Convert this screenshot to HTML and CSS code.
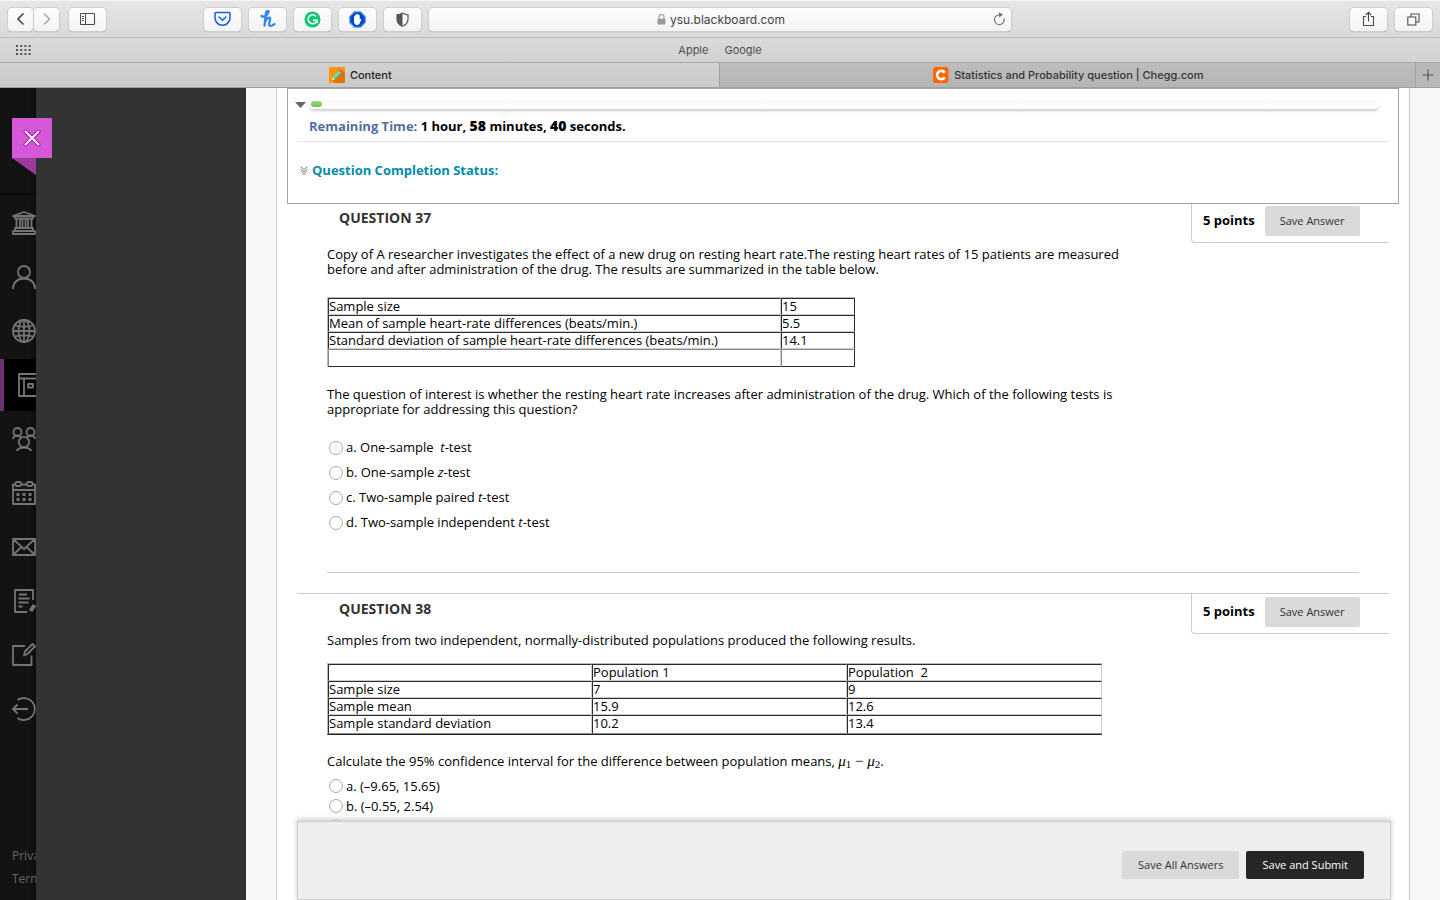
FILE: index.html
```html
<!DOCTYPE html>
<html lang="en">
<head>
<meta charset="utf-8">
<title>Content</title>
<link rel="stylesheet" href="styles.css">
</head>
<body>
<header class="browser">
  <div class="toolbar">
    <div class="tool-side">
      <div class="tool-group wide">
        <div class="history">
          <button class="tool narrow" aria-label="Back"><svg width="26" height="22" viewBox="0 0 26 22"><path d="M15.500 5.500L10 11l5.500 5.500" fill="none" stroke="#444" stroke-width="1.600"/></svg></button>
          <button class="tool narrow" aria-label="Forward"><svg width="26" height="22" viewBox="0 0 26 22"><path d="M10 5.500l5.500 5.500-5.500 5.500" fill="none" stroke="#aaa" stroke-width="1.600"/></svg></button>
        </div>
        <button class="tool" aria-label="Sidebar"><svg width="16" height="14" viewBox="0 0 16 14" fill="none" stroke="#4d4d4d"><rect x=".5" y="1.500" width="14" height="11" rx=".8" stroke-width="1.100"/><path d="M5.500 1.500v11M2 4.500h2M2 6.500h2M2 8.500h2"/></svg></button>
      </div>
      <div class="tool-group">
        <button class="tool" aria-label="Pocket"><svg width="17" height="16" viewBox="0 0 17 16" fill="none" stroke="#1a56f0" stroke-width="1.500" stroke-linecap="round" stroke-linejoin="round"><path d="M1.800 1.500h13.400q.8 0 .8.800v4.500a7.500 7.500 0 0 1-15 0V2.300q0-.8.800-.8z"/><path d="M5 6l3.500 3.200L12 6"/></svg></button>
        <button class="tool" aria-label="Honey"><svg width="16" height="18" viewBox="0 0 16 18" fill="none" stroke="#2f83f5" stroke-width="2.300" stroke-linecap="round" stroke-linejoin="round"><path d="M1.500 6c2 1.500 6 0 7-4 .3-1.500-2-1.500-2.500.8L4.500 15.500M5 12c1-3 4-5.500 5-4 1 1.600-2 6-.5 7.500 1.300 1 4-.5 5-1.500"/></svg></button>
        <button class="tool" aria-label="Grammarly"><svg width="17" height="17" viewBox="0 0 17 17"><circle cx="8.500" cy="8.500" r="8" fill="#12c573"/><path d="M12 5.500A4.400 4.400 0 1 0 12.600 10M9 9.300h4v3" fill="none" stroke="#fff" stroke-width="1.500"/></svg></button>
        <button class="tool" aria-label="Ad blocker"><svg width="17" height="17" viewBox="0 0 17 17"><path d="M5.500.8h6l4.700 4.700v6l-4.700 4.700h-6L.8 11.500v-6z" fill="#0546c5" stroke="#4a98ff" stroke-width="1.200"/><path d="M5 6q0-1 1-1V4q.8-1 1.500 0V3.300q.9-1 1.700 0V4q1-.8 1.500.3v4.500l.8-1q1 0 .8 1l-1.800 4q-1 1.200-2.500 1.200-2.500 0-3-3z" fill="#fff"/></svg></button>
        <button class="tool" aria-label="Privacy report"><svg width="13" height="15" viewBox="0 0 13 15"><path d="M6.500 1Q4 2.700 1 2.800V7q0 5 5.500 7.300Q12 12 12 7V2.800Q9 2.700 6.500 1z" fill="#fafafa" stroke="#555" stroke-width="1.200"/><path d="M6.500 1Q4 2.700 1 2.800V7q0 5 5.500 7.300z" fill="#555"/></svg></button>
      </div>
    </div>
    <div class="address">
      <span class="url"><svg width="9" height="11" viewBox="0 0 9 11"><rect x=".5" y="4.800" width="8" height="5.700" rx=".7" fill="#999"/><path d="M2 5V3a2.500 2.500 0 0 1 5 0v2" fill="none" stroke="#999" stroke-width="1.200"/></svg>ysu.blackboard.com</span>
      <button class="reload" aria-label="Reload"><svg width="13" height="14" viewBox="0 0 13 14"><path d="M11 6.200a4.900 4.900 0 1 1-4.500-3.400" fill="none" stroke="#777" stroke-width="1.200"/><path d="M6 0l4 2.800L6 5.500z" fill="#777"/></svg></button>
    </div>
    <div class="tool-side end">
      <button class="tool" aria-label="Share"><svg width="13" height="16" viewBox="0 0 13 16" fill="none" stroke="#4d4d4d" stroke-width="1.100"><path d="M4 5.500H1.500v9h10v-9H9M6.500 10.500V1.500M3.800 4l2.700-2.700L9.200 4"/></svg></button>
      <button class="tool" aria-label="Show all tabs"><svg width="13" height="13" viewBox="0 0 13 13" fill="none" stroke="#4d4d4d" stroke-width="1.100"><path d="M.8 4h8v8h-8zM4 4V1h8v8H9"/></svg></button>
    </div>
  </div>
  <nav class="favorites">
    <svg class="grid-icon" width="15" height="11" viewBox="0 0 15 11"><path d="M0 1h15M0 5h15M0 9h15" stroke="#555" stroke-width="2" stroke-dasharray="2 2.200"/></svg>
    <a href="#">Apple</a><a href="#">Google</a>
  </nav>
  <div class="tabs">
    <button class="tab active"><svg width="16" height="16" viewBox="0 0 16 16"><path d="M0 0h16v16H0z" fill="#ff9500"/><path d="M3 13L13 3l3 3v10H6z" fill="#e57200"/><path d="M5 11L11 5" stroke="#2fd9bd" stroke-width="3.200"/><path d="M5.300 10L10.500 4.800" stroke="#9cf5dd"/><path d="M11 5l1.500-1.500" stroke="#d9589b" stroke-width="3.200"/><path d="M2.800 13.200l1-3.300 2.300 2.300z" fill="#ffe9c0"/></svg>Content</button>
    <button class="tab"><svg width="16" height="16" viewBox="0 0 16 16"><rect width="15.500" height="16" rx="2.500" fill="#f60"/><path d="M11.800 5.700A4.200 4.200 0 1 0 11.800 10.300" fill="none" stroke="#fff" stroke-width="2.700"/></svg>Statistics and Probability question | Chegg.com</button>
    <button class="new-tab" aria-label="New tab"><svg width="12" height="12" viewBox="0 0 12 12"><path d="M6 .5v11M.5 6h11" stroke="#555" stroke-width="1.200"/></svg></button>
  </div>
</header>

<div class="viewport">
  <nav class="rail">
    <button class="close" aria-label="Close"><svg width="18" height="18" viewBox="0 0 18 18" stroke-linecap="round"><path d="M2.500 2.500l13 13M15.500 2.500l-13 13" stroke="#a616b0" stroke-width="4"/><path d="M2.500 2.500l13 13M15.500 2.500l-13 13" stroke="#fff" stroke-width="2"/></svg></button>
    <svg class="ribbon" width="24" height="17" viewBox="0 0 24 17"><path d="M0 0h24v17z" fill="#9c3b9d"/></svg>
    <ul class="rail-list">
      <li><a href="#" aria-label="Institution"><svg viewBox="0 0 24 24"><path d="M1 5L12 1l11 4zM3 5v2.500h18V5M4.500 8v8.500M8 8v8.500M10.500 8v8.500M13.500 8v8.500M16 8v8.500M19.500 8v8.500M3 19.500V17h18v2.500M1 20h22v3H1z"/></svg></a></li>
      <li><a href="#" aria-label="Profile"><svg viewBox="0 0 24 24"><circle cx="12" cy="7" r="6"/><path d="M1 24c0-6 4-10.500 11-10.500S23 18 23 24"/></svg></a></li>
      <li><a href="#" aria-label="Activity"><svg viewBox="0 0 24 24"><circle cx="12" cy="12" r="11"/><ellipse cx="12" cy="12" rx="5.500" ry="11"/><path d="M12 1v22M1 12h22M3 6.500q9 2.500 18 0M3 17.500q9-2.500 18 0"/></svg></a></li>
      <li class="current"><a href="#" aria-label="Courses"><svg viewBox="0 0 24 24"><path d="M1 1h22v22H1zM1 5.500h22M6 5.500V23M10 11h5v3.500h-5z"/></svg></a></li>
      <li><a href="#" aria-label="Organizations"><svg viewBox="0 0 24 24"><circle cx="5.500" cy="5" r="4"/><circle cx="18.500" cy="5" r="4"/><circle cx="12" cy="15" r="5.200"/><path d="M.8 12q.7-3.500 4.700-3.500 2.500 0 3.500 2M23.200 12q-.7-3.500-4.700-3.500-2.500 0-3.500 2M4.500 24q2-3.500 7.500-3.500t7.500 3.500"/></svg></a></li>
      <li><a href="#" aria-label="Calendar"><svg viewBox="0 0 24 24"><path d="M3 3.500H1V23h22V3.500h-2M9 3.500h6M1 9h22"/><rect x="3.500" y="1" width="5.500" height="4" rx="1.500"/><rect x="15" y="1" width="5.500" height="4" rx="1.500"/><path d="M4.500 13.500h3M10.500 13.500h3M16.500 13.500h3M4.500 18.500h3M10.500 18.500h3M16.500 18.500h3" stroke-width="2.800"/></svg></a></li>
      <li><a href="#" aria-label="Messages"><svg viewBox="0 0 24 24"><path d="M1 4h22v16H1zM1 4l11 10L23 4M1 20l8.500-8M23 20l-8.500-8"/></svg></a></li>
      <li><a href="#" aria-label="Grades"><svg viewBox="0 0 24 24"><path d="M15 23H3V1h18v10M7 5.500h8M6.500 9.500h11M6.500 13.500h10M6.500 17.500h4"/><path d="M22.500 16l-4 6" stroke-width="4"/></svg></a></li>
      <li><a href="#" aria-label="Tools"><svg viewBox="0 0 24 24"><path d="M13 3H1v19h18.500V12.500M12 12.500l1-4 7.500-7.500 2.500 2.500-7.500 7.500z"/></svg></a></li>
      <li><a href="#" aria-label="Sign out"><svg viewBox="0 0 24 24"><path d="M5.500 3a11 11 0 1 1 0 18M1 12h15M5.500 7.500L1 12l4.500 4.500"/></svg></a></li>
    </ul>
    <div class="legal"><a href="#">Privacy</a><a href="#">Terms</a></div>
  </nav>
  <aside class="panel"></aside>

  <main class="stage">
    <div class="page">
      <section class="status">
        <div class="progress-row">
          <svg width="11" height="6" viewBox="0 0 11 6"><path d="M0 0h11L5.500 6z" fill="#666"/></svg>
          <div class="progress"><span class="progress-fill"></span></div>
        </div>
        <p class="time"><span class="time-label">Remaining Time:</span> 1 hour, <b class="big">58</b> minutes, <b class="big">40</b> seconds.</p>
        <button class="completion"><svg width="8" height="9" viewBox="0 0 8 9" fill="none" stroke="#777"><path d="M.5.800L4 3.500 7.500.800M.5 3.300L4 6l3.500-2.700M1.500 6L4 8.300 6.500 6"/></svg>Question Completion Status:</button>
      </section>

      <div class="questions">
        <section class="question">
          <header class="q-head"><h3>QUESTION 37</h3><div class="points"><b>5 points</b><button class="btn">Save Answer</button></div></header>
          <div class="q-body first">
            <p>Copy of A researcher investigates the effect of a new drug on resting heart rate.The resting heart rates of 15 patients are measured before and after administration of the drug. The results are summarized in the table below.</p>
            <table class="data rates">
              <tr><td>Sample size</td><td>15</td></tr>
              <tr><td>Mean of sample heart-rate differences (beats/min.)</td><td>5.5</td></tr>
              <tr><td>Standard deviation of sample heart-rate differences (beats/min.)</td><td>14.1</td></tr>
              <tr class="blank"><td>&nbsp;</td><td></td></tr>
            </table>
            <p>The question of interest is whether the resting heart rate increases after administration of the drug. Which of the following tests is appropriate for addressing this question?</p>
            <div class="options roomy">
              <label><input type="radio" name="q37"><span>a. One-sample&nbsp; <i>t</i>-test</span></label>
              <label><input type="radio" name="q37"><span>b. One-sample <i>z</i>-test</span></label>
              <label><input type="radio" name="q37"><span>c. Two-sample paired <i>t</i>-test</span></label>
              <label><input type="radio" name="q37"><span>d. Two-sample independent <i>t</i>-test</span></label>
            </div>
          </div>
        </section>
        <section class="question">
          <header class="q-head"><h3>QUESTION 38</h3><div class="points"><b>5 points</b><button class="btn">Save Answer</button></div></header>
          <div class="q-body second">
            <p>Samples from two independent, normally-distributed populations produced the following results.</p>
            <table class="data populations">
              <tr><td></td><td>Population 1</td><td>Population&nbsp; 2</td></tr>
              <tr><td>Sample size</td><td>7</td><td>9</td></tr>
              <tr><td>Sample mean</td><td>15.9</td><td>12.6</td></tr>
              <tr><td>Sample standard deviation</td><td>10.2</td><td>13.4</td></tr>
            </table>
            <p>Calculate the 95% confidence interval for the difference between population means, <span class="math"><i>μ</i><sub>1</sub> − <i>μ</i><sub>2</sub></span>.</p>
            <div class="options">
              <label><input type="radio" name="q38"><span>a. (–9.65, 15.65)</span></label>
              <label><input type="radio" name="q38"><span>b. (–0.55, 2.54)</span></label>
              <label><input type="radio" name="q38" aria-label="Option c"></label>
            </div>
          </div>
        </section>
      </div>

      <footer class="submit-bar">
        <button class="btn">Save All Answers</button>
        <button class="btn dark">Save and Submit</button>
      </footer>
    </div>
  </main>
</div>
</body>
</html>
```
FILE: styles.css
```css
* { box-sizing: border-box; }
body {
  margin: 0;
  height: 100vh;
  display: flex;
  flex-direction: column;
  overflow: hidden;
  font: 13px/15px "Open Sans", "Noto Sans", sans-serif;
  color: #000;
}
button { font: inherit; border: 0; padding: 0; background: none; color: inherit; }
a { color: inherit; text-decoration: none; }
p, h3, ul { margin: 0; padding: 0; }
svg { flex: none; display: block; }

/* Browser window */
.browser { font-family: Inter, sans-serif; flex: none; }
.toolbar {
  height: 38px;
  display: flex;
  align-items: center;
  gap: 8px;
  padding: 0 8px;
  background: linear-gradient(#e6e6e6, #d9d9d9);
  border-top: 1px solid #f4f4f4;
  border-bottom: 1px solid #bdbdbd;
}
.tool-side { flex: 1; display: flex; justify-content: space-between; }
.tool-side.end { justify-content: flex-end; gap: 8px; }
.tool-group { display: flex; gap: 8px; }
.tool-group.wide { gap: 10px; }
.history { display: flex; gap: 1px; }
.tool, .address {
  height: 23px;
  background: linear-gradient(#fdfdfd, #f3f3f3);
  border-radius: 4px;
  box-shadow: 0 0 0 1px #cecece, 0 1px 1px #999;
}
.tool { width: 37px; display: flex; align-items: center; justify-content: center; }
.tool.narrow { width: 25px; }
.address { flex: 0 1 582px; display: flex; align-items: center; padding: 0 5px 0 20px; }
.url { flex: 1; display: flex; align-items: center; justify-content: center; gap: 4px; font-size: 12px; color: #444; }
.favorites {
  height: 25px;
  display: flex;
  align-items: center;
  justify-content: center;
  gap: 16px;
  position: relative;
  background: linear-gradient(#dadada, #d2d2d2);
  border-bottom: 1px solid #a9a9a9;
  font-size: 11px;
  color: #505050;
}
.grid-icon { position: absolute; left: 16px; top: 7px; }
.tabs { height: 25px; display: flex; border-bottom: 1px solid #9f9f9f; background: #b8b8b8; font-size: 11px; font-weight: 500; color: #333; }
.tab { flex: 1 1 720px; display: flex; align-items: center; justify-content: center; gap: 5px; padding-left: 2px; border-right: 1px solid #a0a0a0; background: linear-gradient(#bdbdbd, #b5b5b5); }
.tab.active { flex-basis: 744px; background: linear-gradient(#d1d1d1, #cacaca); color: #222; }
.new-tab { flex: 0 0 24px; display: flex; align-items: center; justify-content: center; }

/* Left rail */
.viewport { flex: 1; display: flex; min-height: 0; }
.rail {
  position: relative;
  flex: 0 0 36px;
  min-width: 0;
  display: flex;
  flex-direction: column;
  background: linear-gradient(90deg, #131313 80%, #0d0d0d);
  color: #666;
}
.close {
  position: absolute;
  left: 12px;
  top: 30px;
  width: 40px;
  height: 40px;
  display: flex;
  align-items: center;
  justify-content: center;
  background: #d558d9;
}
.ribbon { margin: 70px 0 18px 12px; }
.rail-list { list-style: none; border-top: 2px solid #0b0b0b; padding-top: 1px; }
.rail-list li { height: 54px; padding: 1px 0; overflow: hidden; }
.rail-list a { display: flex; align-items: center; height: 52px; padding-left: 12px; }
.rail-list svg { width: 24px; height: 24px; fill: none; stroke: #747474; stroke-width: 1.8; stroke-linejoin: round; }
.rail-list .current a { background: #000; border-left: 4px solid #6f3071; padding-left: 14px; }
.legal { margin-top: auto; padding: 0 0 10px 12px; display: flex; flex-direction: column; overflow: hidden; font-size: 12px; line-height: 23px; }
.panel { flex: 0 0 210px; background: #333; }

/* Test page */
.stage { flex: 1; min-width: 0; display: flex; padding: 0 30px; background: #f8f8f8; }
.page { flex: 1; min-width: 0; display: flex; flex-direction: column; padding: 0 10px; background: #fff; border: 1px solid #ccc; border-width: 0 1px; }
.status { position: relative; z-index: 1; flex: none; height: 116px; padding: 12px 9px 0; background: #fff; border: 1px solid #a3a3a3; }
.progress-row { display: flex; align-items: center; gap: 4px; margin: 0 11px 0 -2px; }
.progress { flex: 1; height: 8px; padding: 0 1px; border-radius: 4px; background: linear-gradient(#f9f9f9, #fff); box-shadow: 0 2px 3px #ccc; }
.progress-fill { display: block; width: 11px; height: 6px; border-radius: 3px; background: linear-gradient(#97e07f, #71bd5c); }
.time { margin-top: 7px; padding: 0 12px; height: 26px; line-height: 19px; font-weight: 700; border-bottom: 1px solid #e2e2e2; }
.time-label { color: #536e9e; }
.big { font-size: 14px; }
.completion { display: flex; align-items: center; gap: 4px; margin: 21px 0 0 3px; font-weight: 700; color: #008caa; }

.questions { flex: 1; min-height: 0; overflow: hidden; margin: -2px 10px 0; }
.question { border-top: 1px solid #ccc; }
.q-head { display: flex; justify-content: space-between; height: 36px; }
.q-head h3 { margin: 6px 0 0 42px; font-size: 14px; font-weight: 700; line-height: 17px; color: #333; }
.points {
  flex: 0 0 198px;
  height: 40px;
  display: flex;
  align-items: flex-start;
  gap: 10px;
  padding: 3px 0 0 11px;
  line-height: 28px;
  border: 1px solid #ccc;
  border-width: 0 0 1px 1px;
  border-bottom-left-radius: 4px;
}
.btn { height: 30px; padding: 0 15px; border-radius: 2px; background: #dadada; color: #333; font-size: 11px; }
.q-body { padding: 0 0 0 30px; }
.q-body p { max-width: 814px; }
.first { margin-right: 30px; margin-left: 30px; padding: 8px 0 37px; border-bottom: 1px solid #ccc; }
.question + .question { margin-top: 20px; }
.second { padding-top: 3px; }
.data { border-collapse: separate; border-spacing: 0; table-layout: fixed; border: 1px solid #bbb; border-width: 1px 0 0 1px; }
.data td { height: 17px; padding: 0; border: 1px solid #2b2b2b; border-right-color: #ccc; border-bottom-color: #ccc; line-height: 15px; vertical-align: top; }
.rates { width: 528px; margin: 20px 0; }
.rates td:first-child { width: 453px; }
.rates td:last-child { border-right-color: #2b2b2b; }
.data .blank td { height: 18px; border-top-color: #888; border-left-color: #888; border-bottom-color: #2b2b2b; }
.populations { width: 775px; margin: 15px 0 19px; border-bottom: 1px solid #222; }
.populations td { width: 255px; }
.populations td:first-child { width: 264px; }
.populations tr:last-child td { height: 19px; border-bottom-color: #888; }
.options { margin-top: 7px; }
.options label { display: flex; align-items: center; gap: 3px; height: 20px; padding-left: 2px; }
.options.roomy { margin-top: 18px; }
.roomy label { height: 25px; }
.options input { appearance: none; width: 14px; height: 14px; margin: 0; border: 1px solid #aaa; border-radius: 50%; background: #fff; }
.math { font-family: "Liberation Serif", serif; font-size: 15px; line-height: 12px; }
.math sub { font-size: 11px; line-height: 0; vertical-align: -2px; }

.submit-bar {
  flex: none;
  position: relative;
  height: 79px;
  display: flex;
  justify-content: flex-end;
  align-items: center;
  gap: 7px;
  margin: 0 8px 0 10px;
  padding: 8px 26px 0 0;
  background: #eee;
  border: 1px solid #ccc;
  box-shadow: 0 -2px 5px #ccc;
}
.submit-bar .btn { height: 28px; padding: 0 16px; background: #dadada; }
.submit-bar .dark { background: #262626; color: #fff; }
```
